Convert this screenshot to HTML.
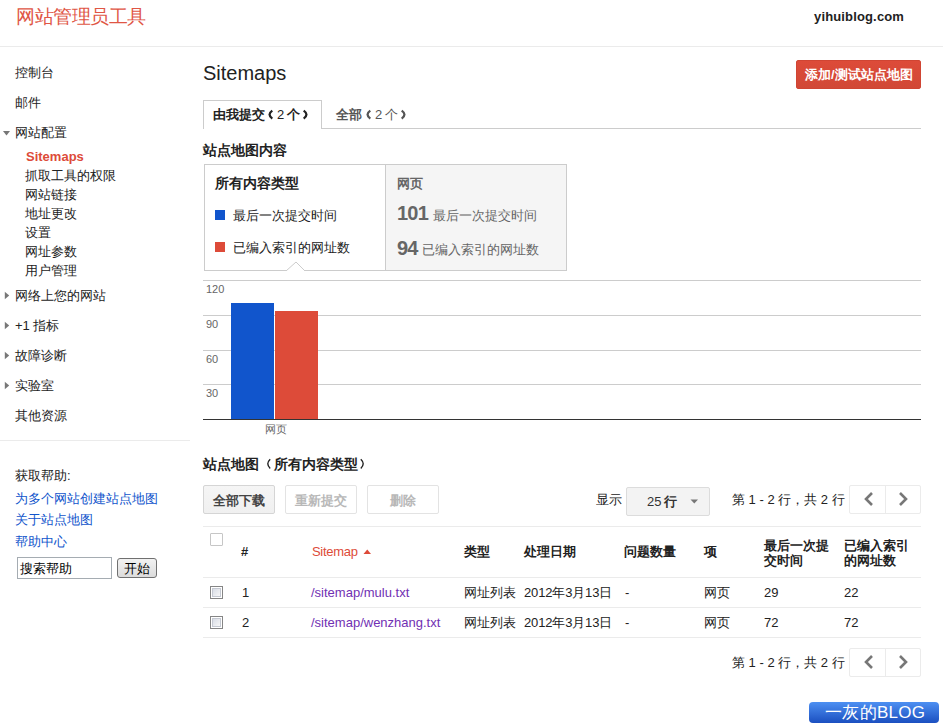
<!DOCTYPE html>
<html><head><meta charset="utf-8">
<style>
*{margin:0;padding:0;box-sizing:border-box}
html,body{width:943px;height:727px;overflow:hidden;background:#fff}
body{font-family:"Liberation Sans",sans-serif;font-size:13px;color:#222;position:relative}
.a{position:absolute;white-space:nowrap;line-height:13px}
.b{font-weight:bold}
.cb{position:absolute;left:210px;width:13px;height:13px;border:1px solid #858585;background:#fff}.cb i{position:absolute;left:1px;top:1px;width:9px;height:9px;border:1px solid #c5c9d2;background:linear-gradient(135deg,#d9dde6,#f7f7f7)}
.hl{position:absolute;height:1px;background:#ebebeb}
</style></head><body>
<!-- header -->
<div class="a" id="title" style="left:16px;top:7px;font-size:19px;letter-spacing:-0.45px;line-height:19px;color:#e05645">网站管理员工具</div>
<div class="a b" id="site" style="left:814px;top:10px;font-size:13px;letter-spacing:0.15px;color:#222">yihuiblog.com</div>
<div class="hl" style="left:0;top:46px;width:943px;background:#ebebeb"></div>

<!-- left nav -->
<div class="a" style="left:15px;top:66px">控制台</div>
<div class="a" style="left:15px;top:96px">邮件</div>
<div class="a" style="left:15px;top:126px">网站配置</div>
<div class="a b" style="left:26px;top:150px;color:#dd4b39">Sitemaps</div>
<div class="a" style="left:25px;top:169px">抓取工具的权限</div>
<div class="a" style="left:25px;top:188px">网站链接</div>
<div class="a" style="left:25px;top:207px">地址更改</div>
<div class="a" style="left:25px;top:226px">设置</div>
<div class="a" style="left:25px;top:245px">网址参数</div>
<div class="a" style="left:25px;top:264px">用户管理</div>
<div class="a" style="left:15px;top:289px">网络上您的网站</div>
<div class="a" style="left:15px;top:319px">+1 指标</div>
<div class="a" style="left:15px;top:349px">故障诊断</div>
<div class="a" style="left:15px;top:379px">实验室</div>
<div class="a" style="left:15px;top:409px">其他资源</div>
<div class="hl" style="left:0;top:440px;width:190px"></div>
<div class="a" style="left:15px;top:469px">获取帮助:</div>
<div class="a" style="left:15px;top:492px;color:#15c">为多个网站创建站点地图</div>
<div class="a" style="left:15px;top:513px;color:#15c">关于站点地图</div>
<div class="a" style="left:15px;top:535px;color:#15c">帮助中心</div>
<div style="position:absolute;left:17px;top:557px;width:95px;height:22px;border:1px solid #a5acb2"></div>
<div class="a" style="left:20px;top:562px;color:#000">搜索帮助</div>
<div style="position:absolute;left:117px;top:558px;width:40px;height:20px;border:1px solid #707070;border-radius:3px;background:linear-gradient(#f2f2f2,#dcdcdc)"></div>
<div class="a" style="left:124px;top:562px;color:#000">开始</div>
<!-- nav triangles -->
<svg style="position:absolute;left:0;top:0" width="12" height="400">
<path d="M3 131 L10 131 L6.5 135.5 Z" fill="#777"/>
<path d="M4.8 291.8 L9.2 295.5 L4.8 299.2 Z" fill="#777"/>
<path d="M4.8 321.8 L9.2 325.5 L4.8 329.2 Z" fill="#777"/>
<path d="M4.8 351.8 L9.2 355.5 L4.8 359.2 Z" fill="#777"/>
<path d="M4.8 381.8 L9.2 385.5 L4.8 389.2 Z" fill="#777"/>
</svg>

<!-- main -->
<div class="a" style="left:203px;top:63px;font-size:20px;line-height:20px;color:#222">Sitemaps</div>
<div style="position:absolute;left:796px;top:60px;width:125px;height:29px;background:linear-gradient(#dd4b39,#d14836);border:1px solid #d04533;border-radius:2px"></div>
<div class="a b" style="left:805px;top:68px;color:#fff">添加/测试站点地图</div>

<!-- tabs -->
<div style="position:absolute;left:203px;top:100px;width:119px;height:29px;border:1px solid #ccc;border-bottom:none;background:#fff"></div>
<div class="hl" style="left:322px;top:128px;width:599px;background:#ccc"></div>
<div class="a b" style="left:213px;top:108px">由我提交</div>
<svg style="position:absolute;left:266.5px;top:110px;overflow:visible" width="6" height="10"><path d="M5.3 0.6 Q-0.2 4.6 5.3 8.6" fill="none" stroke="#222" stroke-width="2.3"/></svg>
<div class="a" style="left:277px;top:108px">2</div>
<div class="a b" style="left:287px;top:108px">个</div>
<svg style="position:absolute;left:302.5px;top:110px;overflow:visible;transform:scaleX(-1)" width="6" height="10"><path d="M5.3 0.6 Q-0.2 4.6 5.3 8.6" fill="none" stroke="#222" stroke-width="2.3"/></svg>
<div class="a b" style="left:336px;top:108px;color:#555">全部</div>
<svg style="position:absolute;left:364.5px;top:110px;overflow:visible" width="6" height="10"><path d="M5.3 0.6 Q-0.2 4.6 5.3 8.6" fill="none" stroke="#555" stroke-width="2.3"/></svg>
<div class="a" style="left:375px;top:108px;color:#555">2</div>
<div class="a" style="left:385px;top:108px;color:#555">个</div>
<svg style="position:absolute;left:400.5px;top:110px;overflow:visible;transform:scaleX(-1)" width="6" height="10"><path d="M5.3 0.6 Q-0.2 4.6 5.3 8.6" fill="none" stroke="#555" stroke-width="2.3"/></svg>

<div class="a b" style="left:203px;top:143px;font-size:14px;line-height:14px">站点地图内容</div>

<!-- legend -->
<div style="position:absolute;left:204px;top:164px;width:363px;height:107px;border:1px solid #ccc;background:#fff"></div>
<div style="position:absolute;left:385px;top:165px;width:181px;height:105px;border-left:1px solid #ccc;background:#f5f5f5"></div>
<div class="a b" style="left:215px;top:176px;font-size:14px;line-height:14px">所有内容类型</div>
<div style="position:absolute;left:215px;top:210px;width:10px;height:10px;background:#1155cc"></div>
<div class="a" style="left:233px;top:209px">最后一次提交时间</div>
<div style="position:absolute;left:215px;top:242px;width:10px;height:10px;background:#dd4b39"></div>
<div class="a" style="left:233px;top:241px">已编入索引的网址数</div>
<svg style="position:absolute;left:286px;top:261px" width="20" height="11"><path d="M0 10 L10 1 L19 10" fill="#fff" stroke="#ccc" stroke-width="1"/><rect x="0" y="10" width="20" height="1" fill="#fff"/></svg>
<div class="a b" style="left:397px;top:177px;color:#666">网页</div>
<div class="a b" style="left:397px;top:203px;font-size:20px;line-height:20px;letter-spacing:-0.8px;color:#666">101</div>
<div class="a" style="left:433px;top:209px;color:#666">最后一次提交时间</div>
<div class="a b" style="left:397px;top:238px;font-size:20px;line-height:20px;letter-spacing:-0.8px;color:#666">94</div>
<div class="a" style="left:422px;top:243px;color:#666">已编入索引的网址数</div>

<!-- chart -->
<div class="hl" style="left:203px;top:280px;width:718px;background:#ccc"></div>
<div class="hl" style="left:203px;top:315px;width:718px;background:#ccc"></div>
<div class="hl" style="left:203px;top:350px;width:718px;background:#ccc"></div>
<div class="hl" style="left:203px;top:384px;width:718px;background:#ccc"></div>
<div class="a" style="left:206px;top:284px;font-size:11px;line-height:11px;color:#666">120</div>
<div class="a" style="left:206px;top:319px;font-size:11px;line-height:11px;color:#666">90</div>
<div class="a" style="left:206px;top:354px;font-size:11px;line-height:11px;color:#666">60</div>
<div class="a" style="left:206px;top:388px;font-size:11px;line-height:11px;color:#666">30</div>
<div style="position:absolute;left:231px;top:303px;width:43px;height:116px;background:#1155cc"></div>
<div style="position:absolute;left:275px;top:311px;width:43px;height:108px;background:#dd4b39"></div>
<div class="hl" style="left:203px;top:419px;width:718px;background:#333"></div>
<div class="a" style="left:265px;top:424px;font-size:11px;line-height:11px;color:#666">网页</div>

<!-- sitemaps table -->
<div class="a b" style="left:203px;top:457px;font-size:14px;line-height:14px">站点地图</div>
<svg style="position:absolute;left:265.5px;top:459px;overflow:visible" width="6" height="10"><path d="M4.2 0.3 Q-0.6 4.85 4.2 9.4" fill="none" stroke="#222" stroke-width="1.4"/></svg>
<div class="a b" style="left:274px;top:457px;font-size:14px;line-height:14px">所有内容类型</div>
<svg style="position:absolute;left:358.5px;top:459px;overflow:visible;transform:scaleX(-1)" width="6" height="10"><path d="M4.2 0.3 Q-0.6 4.85 4.2 9.4" fill="none" stroke="#222" stroke-width="1.4"/></svg>
<div style="position:absolute;left:203px;top:485px;width:72px;height:29px;border:1px solid #d5d5d5;border-radius:2px;background:linear-gradient(#f5f5f5,#f0f0f0)"></div>
<div class="a b" style="left:213px;top:494px;color:#444">全部下载</div>
<div style="position:absolute;left:285px;top:485px;width:72px;height:29px;border:1px solid #e3e3e3;border-radius:2px;background:#fff"></div>
<div class="a b" style="left:295px;top:494px;color:#b8b8b8">重新提交</div>
<div style="position:absolute;left:367px;top:485px;width:72px;height:29px;border:1px solid #e3e3e3;border-radius:2px;background:#fff"></div>
<div class="a b" style="left:390px;top:494px;color:#b8b8b8">删除</div>

<div class="a" style="left:596px;top:493px">显示</div>
<div style="position:absolute;left:626px;top:487px;width:84px;height:29px;border:1px solid #dcdcdc;border-radius:2px;background:#f3f3f3"></div>
<div class="a" style="left:647px;top:495px;color:#333">25</div>
<div class="a b" style="left:664px;top:495px;color:#333">行</div>
<svg style="position:absolute;left:690px;top:499px" width="9" height="6"><path d="M0.5 0.5 L8 0.5 L4.25 4.5Z" fill="#777"/></svg>

<div class="a" style="left:732px;top:493px">第 1 - 2 行，共 2 行</div>
<div style="position:absolute;left:849px;top:485px;width:72px;height:29px;border:1px solid #ebebeb;border-radius:2px"></div>
<div style="position:absolute;left:885px;top:485px;width:1px;height:29px;background:#ebebeb"></div>
<svg style="position:absolute;left:861.5px;top:491.3px" width="14" height="16"><path d="M10 2 L4 8 L10 14" fill="none" stroke="#777" stroke-width="2.6"/></svg>
<svg style="position:absolute;left:895.5px;top:491.3px" width="14" height="16"><path d="M4 2 L10 8 L4 14" fill="none" stroke="#777" stroke-width="2.6"/></svg>

<div class="hl" style="left:203px;top:526px;width:718px"></div>
<div style="position:absolute;left:210px;top:533px;width:13px;height:13px;border:1px solid #c6c6c6;border-radius:1px;background:#fff"></div>
<div class="a b" style="left:241px;top:545px">#</div>
<div class="a" style="left:312px;top:545px;letter-spacing:-0.3px;color:#dd4b39">Sitemap</div>
<svg style="position:absolute;left:363px;top:549px" width="9" height="6"><path d="M0.5 5 L8 5 L4.25 0.5Z" fill="#dd4b39"/></svg>
<div class="a b" style="left:464px;top:545px">类型</div>
<div class="a b" style="left:524px;top:545px">处理日期</div>
<div class="a b" style="left:624px;top:545px">问题数量</div>
<div class="a b" style="left:704px;top:545px">项</div>
<div class="a b" style="left:764px;top:539px;line-height:14.5px">最后一次提<br>交时间</div>
<div class="a b" style="left:844px;top:539px;line-height:14.5px">已编入索引<br>的网址数</div>
<div class="hl" style="left:203px;top:577px;width:718px"></div>

<div class="cb" style="top:586px"><i></i></div>
<div class="a" style="left:242px;top:586px">1</div>
<div class="a" style="left:311px;top:586px;color:#7130b3">/sitemap/mulu.txt</div>
<div class="a" style="left:464px;top:586px">网址列表</div>
<div class="a" style="left:524px;top:586px;letter-spacing:-0.15px">2012年3月13日</div>
<div class="a" style="left:625px;top:586px">-</div>
<div class="a" style="left:704px;top:586px">网页</div>
<div class="a" style="left:764px;top:586px">29</div>
<div class="a" style="left:844px;top:586px">22</div>
<div class="hl" style="left:203px;top:607px;width:718px"></div>

<div class="cb" style="top:616px"><i></i></div>
<div class="a" style="left:242px;top:616px">2</div>
<div class="a" style="left:311px;top:616px;color:#7130b3">/sitemap/wenzhang.txt</div>
<div class="a" style="left:464px;top:616px">网址列表</div>
<div class="a" style="left:524px;top:616px;letter-spacing:-0.15px">2012年3月13日</div>
<div class="a" style="left:625px;top:616px">-</div>
<div class="a" style="left:704px;top:616px">网页</div>
<div class="a" style="left:764px;top:616px">72</div>
<div class="a" style="left:844px;top:616px">72</div>
<div class="hl" style="left:203px;top:637px;width:718px"></div>

<div class="a" style="left:732px;top:656px">第 1 - 2 行，共 2 行</div>
<div style="position:absolute;left:849px;top:648px;width:72px;height:29px;border:1px solid #ebebeb;border-radius:2px"></div>
<div style="position:absolute;left:885px;top:648px;width:1px;height:29px;background:#ebebeb"></div>
<svg style="position:absolute;left:861.5px;top:654.3px" width="14" height="16"><path d="M10 2 L4 8 L10 14" fill="none" stroke="#777" stroke-width="2.6"/></svg>
<svg style="position:absolute;left:895.5px;top:654.3px" width="14" height="16"><path d="M4 2 L10 8 L4 14" fill="none" stroke="#777" stroke-width="2.6"/></svg>

<!-- watermark -->
<div style="position:absolute;left:809px;top:702px;width:130px;height:21px;border-radius:4px;background:linear-gradient(#4d90f2,#1b4fc0)"></div>
<div class="a" style="left:825px;top:704px;font-size:17px;line-height:17px;letter-spacing:0.3px;color:#fff">一灰的BLOG</div>
</body></html>
